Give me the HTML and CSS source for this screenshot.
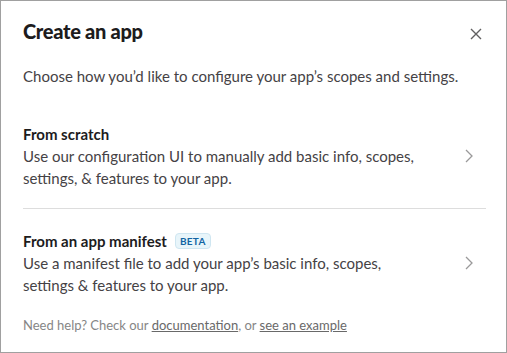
FILE: index.html
```html
<!DOCTYPE html>
<html lang="en">
<head>
    <meta charset="UTF-8">
    <title>Create an app</title>
    <link rel="stylesheet" href="styles.css">
</head>
<body>
    <div class="modal">
        <div class="modal-header">
            <h1>Create an app</h1>
            <button class="btn-close" aria-label="Close">
                <svg width="12" height="12" viewBox="0 0 12 12">
                    <path d="M1 1 L11 11 M11 1 L1 11" stroke="#616061" stroke-width="1.4" fill="none"/>
                </svg>
            </button>
        </div>

        <p class="intro">Choose how you’d like to configure your app’s scopes and settings.</p>

        <div class="option">
            <div class="option-text">
                <h2>From scratch</h2>
                <p>Use our configuration UI to manually add basic info, scopes, settings, &amp; features to your app.</p>
            </div>
            <svg class="chevron" width="10" height="16" viewBox="0 0 10 16">
                <path d="M2 2 L8 8 L2 14" stroke="#9a999a" stroke-width="1.3" fill="none"/>
            </svg>
        </div>

        <div class="option">
            <div class="option-text">
                <h2>From an app manifest <span class="badge">BETA</span></h2>
                <p>Use a manifest file to add your app’s basic info, scopes, settings &amp; features to your app.</p>
            </div>
            <svg class="chevron" width="10" height="16" viewBox="0 0 10 16">
                <path d="M2 2 L8 8 L2 14" stroke="#9a999a" stroke-width="1.3" fill="none"/>
            </svg>
        </div>

        <p class="help">Need help? Check our <a href="#">documentation</a>, or <a href="#">see an example</a></p>
    </div>
</body>
</html>
```

FILE: styles.css
```css
* {
    margin: 0;
    padding: 0;
    box-sizing: border-box;
}

body {
    font-family: Lato, 'Noto Sans', sans-serif;
    color: #1d1c1d;
    background: white;
}

.modal {
    width: 507px;
    height: 353px;
    border: 1px solid #a0a0a0;
    background: white;
    padding: 0 20px 0 22px;
}

.modal-header {
    display: flex;
    align-items: center;
    justify-content: space-between;
    padding-top: 13px;
    height: 46px;
}

.modal-header h1 {
    font-size: 20px;
    font-weight: 900;
    line-height: 30px;
    letter-spacing: -0.3px;
}

.btn-close {
    background: none;
    border: none;
    width: 20px;
    height: 20px;
    display: flex;
    align-items: center;
    justify-content: center;
    margin-top: 6px;
    cursor: pointer;
}

.intro {
    font-size: 15px;
    line-height: 22px;
    color: #454245;
    margin-top: 18px;
    margin-bottom: 15px;
}

.option {
    display: flex;
    align-items: center;
    padding: 21px 0 19px;
    cursor: pointer;
}

.option + .option {
    border-top: 1px solid #dddddd;
}

.option-text {
    flex: 1;
}

.option h2 {
    font-size: 15px;
    font-weight: 700;
    line-height: 22px;
    display: flex;
    align-items: center;
    gap: 8px;
}

.option p {
    font-size: 15px;
    line-height: 22px;
    color: #454245;
    max-width: 410px;
}

.chevron {
    margin: 0 12px 0 20px;
}

.badge {
    font-size: 10px;
    font-weight: 700;
    color: #1264a3;
    background: #e8f5fa;
    border: 1px solid #cfe6f1;
    border-radius: 4px;
    padding: 0 4px;
    line-height: 14px;
    letter-spacing: 0.3px;
}

.help {
    font-size: 13px;
    line-height: 18px;
    color: #868686;
    margin-top: 1px;
}

.help a {
    color: #696969;
}
```
